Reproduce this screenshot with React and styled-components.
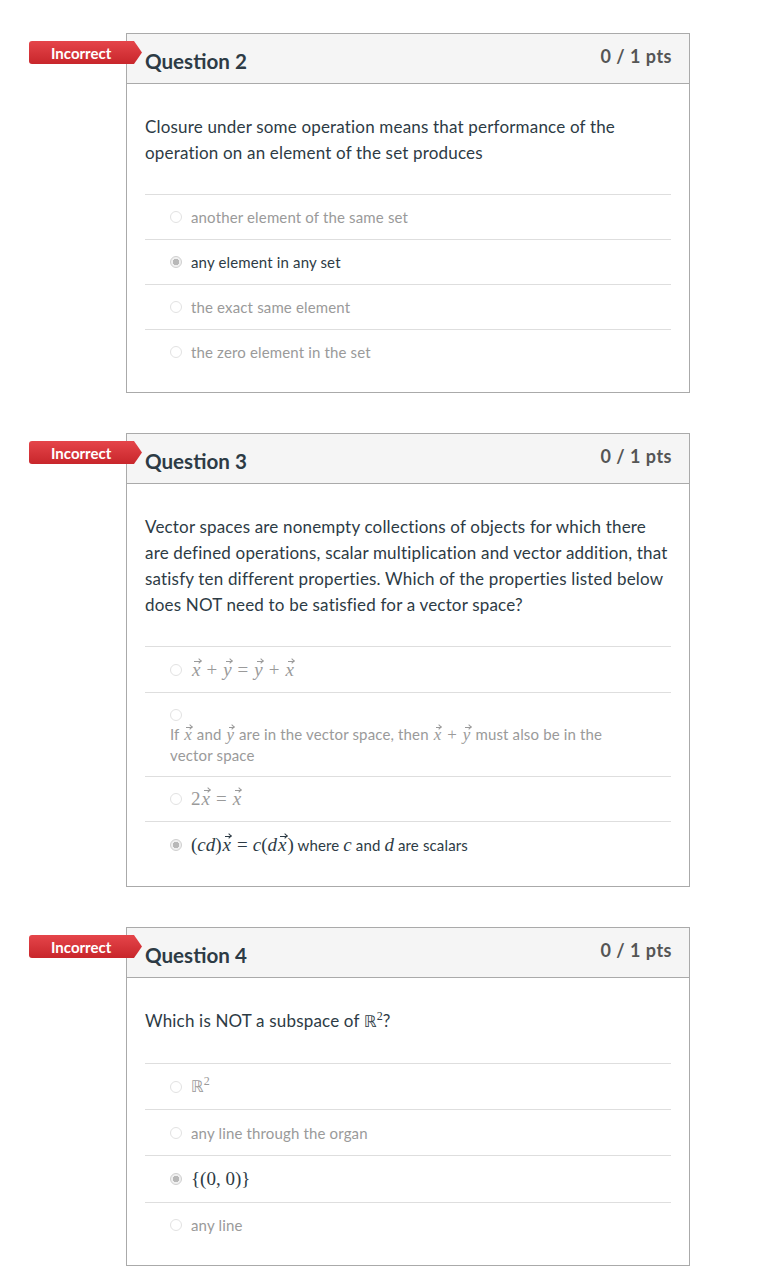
import React from "react";
import styled, { createGlobalStyle, css } from "styled-components";

const Global = createGlobalStyle`
  html, body { margin: 0; padding: 0; background: #fff; }
  body { font-family: Lato, "Open Sans", "Liberation Sans", sans-serif; color: #2d3b45; }
`;

const Page = styled.div`
  display: flex;
  flex-direction: column;
  gap: 40px;
  padding: 33px 0 14px 126px;
`;

const Card = styled.div`
  position: relative;
  width: 562px;
  border: 1px solid #aaa;
  background: #fff;
`;

const Badge = styled.div`
  position: absolute;
  left: -98px;
  top: 7px;
  width: 113px;
  height: 23px;
  box-sizing: border-box;
  padding-left: 22px;
  display: flex;
  align-items: center;
  color: #fff;
  font-weight: 700;
  font-size: 15px;
  background: linear-gradient(#e5454a, #c8262b);
  border-radius: 3px 0 0 3px;
  clip-path: polygon(0 0, 105px 0, 113px 50%, 105px 100%, 0 100%);
`;

const Header = styled.div`
  display: flex;
  justify-content: space-between;
  align-items: flex-start;
  height: 50px;
  box-sizing: border-box;
  padding: 0 17px 0 18px;
  background: #f5f5f5;
  border-bottom: 1px solid #aaa;
`;

const Title = styled.div`
  margin-top: 14px;
  font-size: 20.6px;
  line-height: 26px;
  font-weight: 700;
  color: #2d3b45;
`;

const Points = styled.div`
  margin-top: 11px;
  font-size: 18px;
  letter-spacing: 0.5px;
  line-height: 22px;
  font-weight: 700;
  color: #555;
`;

const Body = styled.div`
  padding: 30px 18px 18px;
`;

const QText = styled.div`
  font-size: 17px;
  letter-spacing: 0.18px;
  line-height: 26px;
  color: #2d3b45;
  margin-bottom: 28px;
`;

const Answer = styled.div`
  display: flex;
  flex-wrap: ${(p) => (p.$wrap ? "wrap" : "nowrap")};
  align-items: center;
  border-top: 1px solid #dedede;
  padding: ${(p) => (p.$wrap ? "13px 60px 11px 25px" : "12px 0 12px 25px")};
  min-height: ${(p) => p.$h || 20}px;
  font-size: 15px;
  letter-spacing: 0.15px;
  line-height: 20px;
  color: ${(p) => (p.$selected ? "#2d3b45" : "#9a9a9a")};
`;

const Radio = styled.span`
  flex: none;
  box-sizing: border-box;
  width: 12px;
  height: 12px;
  border-radius: 50%;
  margin-right: 9px;
  border: 1px solid #e2e2e2;
  background: #fff;
  ${(p) =>
    p.$checked &&
    css`
      border-color: #cfcfcf;
      background: radial-gradient(circle, #b8b8b8 0 3px, #f0f0f0 3.5px);
    `}
`;

const RadioLine = styled.div`
  flex-basis: 100%;
  display: flex;
  height: 18px;
  align-items: center;
`;

const WrapText = styled.div`
  flex-basis: 100%;
`;

const Math = styled.span`
  font-family: "Liberation Serif", "DejaVu Serif", serif;
  font-size: ${(p) => p.$size || 19}px;
  letter-spacing: 0;
  white-space: nowrap;
  color: ${(p) => (p.$dark ? "#2d3b45" : "inherit")};
`;

const V = styled.i`
  position: relative;
  display: inline-block;
  line-height: 1;
  font-style: italic;
  padding: 0 1px;
  &::before {
    content: "";
    position: absolute;
    left: 0.18em;
    right: 0.05em;
    top: 0.06em;
    height: 1px;
    background: currentColor;
  }
  &::after {
    content: "";
    position: absolute;
    right: 0.05em;
    top: calc(0.06em - 2px);
    width: 3px;
    height: 3px;
    border-top: 1px solid currentColor;
    border-right: 1px solid currentColor;
    transform: rotate(45deg);
  }
`;

const I = styled.i`
  font-style: italic;
`;

const Op = styled.span`
  padding: 0 5px;
`;

const Sup = styled.sup`
  font-size: 12px;
  line-height: 0;
`;

const Bb = styled.span`
  font-family: "DejaVu Sans", sans-serif;
  font-size: 0.85em;
`;

const Opt = ({ selected, children, wrap, h }) =>
  wrap ? (
    <Answer $selected={selected} $wrap>
      <RadioLine>
        <Radio $checked={selected} />
      </RadioLine>
      <WrapText>{children}</WrapText>
    </Answer>
  ) : (
    <Answer $selected={selected} $h={h}>
      <Radio $checked={selected} />
      <span>{children}</span>
    </Answer>
  );

const Question = ({ n, text, children }) => (
  <Card>
    <Badge>Incorrect</Badge>
    <Header>
      <Title>Question {n}</Title>
      <Points>0 / 1 pts</Points>
    </Header>
    <Body>
      <QText>{text}</QText>
      {children}
    </Body>
  </Card>
);

const x = <V>x</V>;
const y = <V>y</V>;

export default function App() {
  return (
    <>
      <Global />
      <Page>
        <Question
          n={2}
          text="Closure under some operation means that performance of the operation on an element of the set produces"
        >
          <Opt>another element of the same set</Opt>
          <Opt selected>any element in any set</Opt>
          <Opt>the exact same element</Opt>
          <Opt>the zero element in the set</Opt>
        </Question>

        <Question
          n={3}
          text="Vector spaces are nonempty collections of objects for which there are defined operations, scalar multiplication and vector addition, that satisfy ten different properties. Which of the properties listed below does NOT need to be satisfied for a vector space?"
        >
          <Opt h={21}>
            <Math>
              {x}
              <Op>+</Op>
              {y}
              <Op>=</Op>
              {y}
              <Op>+</Op>
              {x}
            </Math>
          </Opt>
          <Opt wrap>
            If <Math $size={17}>{x}</Math> and <Math $size={17}>{y}</Math> are in the vector space, then{" "}
            <Math $size={17}>
              {x}
              <Op>+</Op>
              {y}
            </Math>{" "}
            must also be in the vector space
          </Opt>
          <Opt>
            <Math>
              2{x}
              <Op>=</Op>
              {x}
            </Math>
          </Opt>
          <Opt selected h={22}>
            <Math $dark>
              (<I>cd</I>){x}
              <Op>=</Op>
              <I>c</I>(<I>d</I>
              {x})
            </Math>{" "}
            where <Math $dark><I>c</I></Math> and <Math $dark><I>d</I></Math> are scalars
          </Opt>
        </Question>

        <Question
          n={4}
          text={
            <>
              Which is NOT a subspace of{" "}
              <Math $dark>
                <Bb>ℝ</Bb>
                <Sup>2</Sup>
              </Math>
              ?
            </>
          }
        >
          <Opt>
            <Math>
              <Bb>ℝ</Bb>
              <Sup>2</Sup>
            </Math>
          </Opt>
          <Opt h={21}>any line through the organ</Opt>
          <Opt selected h={22}>
            <Math $dark>{"{(0, 0)}"}</Math>
          </Opt>
          <Opt>any line</Opt>
        </Question>
      </Page>
    </>
  );
}
